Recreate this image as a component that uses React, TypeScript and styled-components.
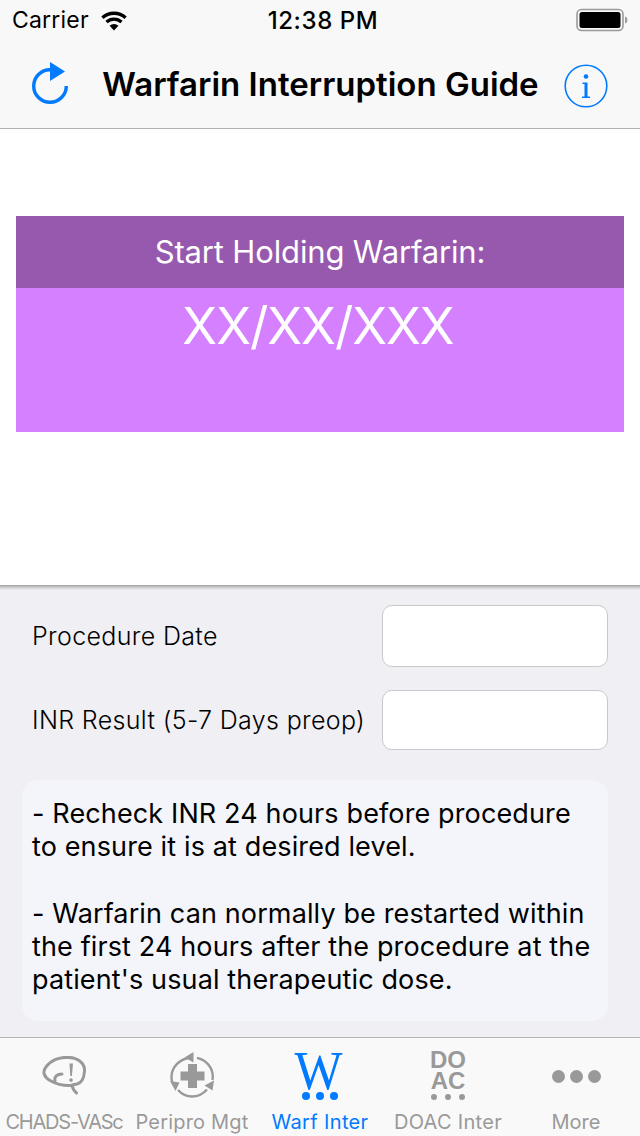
import React from 'react';
import styled, { createGlobalStyle } from 'styled-components';

const GlobalStyle = createGlobalStyle`
  html, body {
    margin: 0;
    padding: 0;
    background: #efeff4;
  }
  * {
    box-sizing: border-box;
  }
`;

const font = `Inter, "Liberation Sans", sans-serif`;

const Screen = styled.div`
  display: flex;
  flex-direction: column;
  width: 640px;
  height: 1136px;
  overflow: hidden;
  background: #efeff4;
  font-family: ${font};
  color: #000;
`;

const TopBar = styled.div`
  height: 129px;
  flex: none;
  background: #f8f8f8;
  border-bottom: 1px solid #b2b2b2;
`;

const StatusBar = styled.div`
  display: grid;
  grid-template-columns: 1fr auto 1fr;
  align-items: center;
  height: 40px;
  padding: 0 12px;
  font-size: 23px;
`;

const StatusLeft = styled.div`
  display: flex;
  align-items: center;
  gap: 11px;
  font-weight: 400;
  letter-spacing: 0.2px;
`;

const Clock = styled.div`
  margin-left: 6px;
  font-size: 24px;
  font-weight: 500;
  letter-spacing: 0.6px;
`;

const StatusRight = styled.div`
  display: flex;
  justify-content: flex-end;
`;

const NavBar = styled.div`
  display: flex;
  align-items: center;
  justify-content: space-between;
  height: 88px;
  padding: 0 32px;
`;

const NavTitle = styled.div`
  margin-left: 5px;
  font-size: 33px;
  font-weight: 600;
  letter-spacing: 0;
  white-space: nowrap;
`;

const Hero = styled.div`
  flex: none;
  height: 456px;
  background: #fff;
  padding: 87px 16px 0;
`;

const ResultHead = styled.div`
  display: flex;
  align-items: center;
  justify-content: center;
  height: 72px;
  padding-bottom: 2px;
  background: #9659ad;
  color: #fff;
  font-size: 31px;
  letter-spacing: -0.15px;
`;

const ResultBody = styled.div`
  height: 144px;
  padding: 7px 4px 0 0;
  background: #d580ff;
  color: #fff;
  font-size: 51px;
  line-height: 62px;
  letter-spacing: -1px;
  text-align: center;
`;

const Divider = styled.div`
  flex: none;
  height: 5px;
  background: linear-gradient(#9e9e9e, #c9c9cc 40%, #efeff4);
`;

const FormArea = styled.div`
  flex: 1;
  display: flex;
  flex-direction: column;
  padding: 15px 32px 16px;
`;

const Row = styled.div<{ $height: number; $gap: number }>`
  display: flex;
  align-items: center;
  justify-content: space-between;
  height: ${(p) => p.$height}px;
  margin-bottom: ${(p) => p.$gap}px;
`;

const Label = styled.div`
  font-size: 25px;
  font-weight: 300;
  letter-spacing: 0.35px;
  white-space: nowrap;
`;

const Field = styled.div`
  width: 226px;
  height: 100%;
  background: #fff;
  border: 1px solid #c9c9cc;
  border-radius: 10px;
`;

const Note = styled.div`
  margin-left: -10px;
  height: 241px;
  padding: 17px 10px;
  background: #f4f5fa;
  border-radius: 16px;
  font-size: 27px;
  line-height: 33.3px;
  font-weight: 400;
  letter-spacing: 0.13px;
`;

const TabBar = styled.div`
  flex: none;
  display: grid;
  grid-template-columns: repeat(5, 128px);
  height: 99px;
  background: #f9f9f9;
  border-top: 1px solid #b2b2b2;
`;

const Tab = styled.div<{ $active?: boolean }>`
  display: flex;
  flex-direction: column;
  align-items: center;
  color: ${(p) => (p.$active ? '#007aff' : '#999')};
`;

const TabIcon = styled.div`
  display: flex;
  flex-direction: column;
  align-items: center;
  justify-content: center;
  height: 62px;
  padding-top: 14px;
`;

const TabLabel = styled.div<{ $spacing: number }>`
  margin-top: 10px;
  font-size: 20px;
  line-height: 24px;
  font-weight: 400;
  white-space: nowrap;
  letter-spacing: ${(p) => p.$spacing}px;
`;

const SerifW = styled.div`
  margin-right: 4px;
  font-family: "Liberation Serif", serif;
  font-size: 54px;
  line-height: 36px;
  height: 39px;
  transform: scaleX(0.94);
`;

const DoacIcon = styled.div`
  display: flex;
  flex-direction: column;
  align-items: center;
  margin-bottom: 4px;
`;

const DoacText = styled.div`
  margin-bottom: 3px;
  font-family: "Liberation Sans", sans-serif;
  font-weight: 700;
  font-size: 24px;
  line-height: 21px;
  text-align: center;
`;

const DotRow = styled.div<{ $size: number; $gap: number }>`
  display: flex;
  gap: ${(p) => p.$gap}px;
  i {
    display: block;
    width: ${(p) => p.$size}px;
    height: ${(p) => p.$size}px;
    border-radius: 50%;
    background: currentColor;
  }
`;

const Dots = ({ size, gap }: { size: number; gap: number }) => (
  <DotRow $size={size} $gap={gap}>
    <i />
    <i />
    <i />
  </DotRow>
);

const Wifi = () => (
  <svg width="28" height="21" viewBox="0 0 28 21">
    <path d="M14 20.500 9.600 15.800a6.600 6.600 0 0 1 8.800 0Z" fill="#000" />
    <path d="M6.500 12a11 11 0 0 1 15 0M2.400 7.800a17 17 0 0 1 23.200 0" fill="none" stroke="#000" strokeWidth="3.300" />
  </svg>
);

const Battery = () => (
  <svg width="52" height="24" viewBox="0 0 52 24">
    <rect x="1" y="1.500" width="46" height="21" rx="4.500" fill="none" stroke="#9a9a9a" strokeWidth="1.600" />
    <rect x="3.500" y="4" width="41" height="16" rx="2.500" fill="#000" />
    <path d="M49 8.500c1.600.4 2.400 1.800 2.400 3.500s-.8 3.100-2.400 3.500Z" fill="#9a9a9a" />
  </svg>
);

const RefreshIcon = () => (
  <svg width="40" height="46" viewBox="0 0 40 46">
    <path d="M18 8.700A16.300 16.300 0 1 0 34.300 25" fill="none" stroke="#007aff" strokeWidth="3.400" />
    <path d="M18 1 33 10.500 18 20Z" fill="#007aff" />
  </svg>
);

const InfoIcon = () => (
  <svg width="44" height="48" viewBox="0 -4 44 48">
    <circle cx="22" cy="22" r="20.800" fill="none" stroke="#007aff" strokeWidth="1.600" />
    <circle cx="22" cy="12.500" r="2.300" fill="#007aff" />
    <path d="M18.500 18.500h5v14h2.500v1.500h-8v-1.500h2.500v-12.500h-2Z" fill="#007aff" />
  </svg>
);

const BrainIcon = () => (
  <svg width="44" height="40" viewBox="0 0 44 40">
    <path
      d="M30 29.500C22 30 14 28 8 24.500 2 21 0 16 4 11 9 4 18 1 25 1.500 35 1 43 7 42.500 15 42 22 40 27 35 28L30 29C30.500 32 32 35 34.500 37M13 24.500C12 21 15 18 20 18"
      fill="none"
      stroke="#999"
      strokeWidth="3"
      strokeLinecap="round"
      strokeLinejoin="round"
    />
    <path d="M27.500 7.500 28.300 20h1.600L31 7.500ZM29 22.200a1.800 1.800 0 1 0 .1 0Z" fill="#999" />
  </svg>
);

const CycleIcon = () => (
  <svg width="46" height="48" viewBox="0 0 46 48">
    <g fill="none" stroke="#999" strokeWidth="2.400">
      <path d="M19 6C10 8 3 15 2.500 24c-.1 2 .1 4 .7 6" />
      <path d="M28 5.800C37 8 43.500 15 43.800 24c0 1.500-.1 2.500-.4 4" />
      <path d="M9 38c4 4.500 9 6.500 14 6.500 6 0 11-2.500 15-7" />
    </g>
    <path d="M24.500 0v10.500L15.500 5.500ZM1 29l9.500 1.500-4 8.500ZM45 28.500l-1.500 10-8-5Z" fill="#999" />
    <path d="M19 12h9v7.500h7.500v9H28V36h-9v-7.500h-7.500v-9H19Z" fill="#999" />
  </svg>
);

const tabs = [
  { label: 'CHADS-VASc', spacing: -1.2, icon: <BrainIcon /> },
  { label: 'Peripro Mgt', spacing: 0.2, icon: <CycleIcon /> },
  {
    label: 'Warf Inter',
    spacing: 0.35,
    active: true,
    icon: (
      <>
        <SerifW>W</SerifW>
        <Dots size={8} gap={6} />
      </>
    ),
  },
  {
    label: 'DOAC Inter',
    spacing: 0.3,
    icon: (
      <DoacIcon>
        <DoacText>
          DO
          <br />
          AC
        </DoacText>
        <Dots size={6} gap={8} />
      </DoacIcon>
    ),
  },
  { label: 'More', spacing: 0, icon: <Dots size={13} gap={5} /> },
];

const App: React.FC = () => (
  <Screen>
    <GlobalStyle />
    <TopBar>
      <StatusBar>
        <StatusLeft>
          Carrier
          <Wifi />
        </StatusLeft>
        <Clock>12:38 PM</Clock>
        <StatusRight>
          <Battery />
        </StatusRight>
      </StatusBar>
      <NavBar>
        <RefreshIcon />
        <NavTitle>Warfarin Interruption Guide</NavTitle>
        <InfoIcon />
      </NavBar>
    </TopBar>
    <Hero>
      <ResultHead>Start Holding Warfarin:</ResultHead>
      <ResultBody>XX/XX/XXX</ResultBody>
    </Hero>
    <Divider />
    <FormArea>
      <Row $height={62} $gap={23}>
        <Label>Procedure Date</Label>
        <Field />
      </Row>
      <Row $height={60} $gap={30}>
        <Label>INR Result (5-7 Days preop)</Label>
        <Field />
      </Row>
      <Note>
        - Recheck INR 24 hours before procedure
        <br />
        to ensure it is at desired level.
        <br />
        <br />
        - Warfarin can normally be restarted within
        <br />
        the first 24 hours after the procedure at the
        <br />
        patient's usual therapeutic dose.
      </Note>
    </FormArea>
    <TabBar>
      {tabs.map((t) => (
        <Tab key={t.label} $active={t.active}>
          <TabIcon>{t.icon}</TabIcon>
          <TabLabel $spacing={t.spacing}>{t.label}</TabLabel>
        </Tab>
      ))}
    </TabBar>
  </Screen>
);

export default App;
